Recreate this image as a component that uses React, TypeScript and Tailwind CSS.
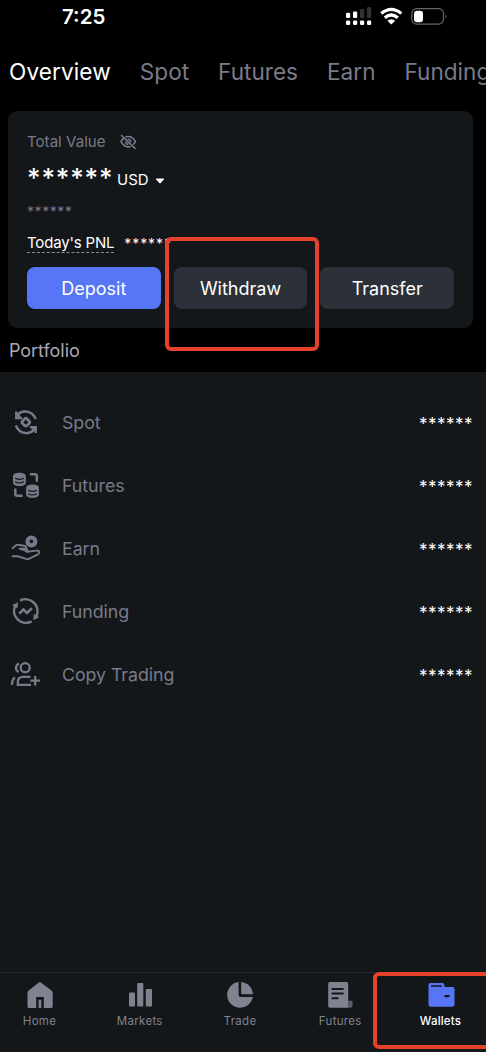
import type { ReactNode } from "react";

const tabs = ["Spot", "Futures", "Earn", "Funding"];

function SpotIcon() {
  return (
    <svg width="32" height="32" viewBox="0 0 32 32" fill="none" stroke="currentColor" strokeWidth="2.5">
      <path d="M6.5 10.5C11 3.8 21 3.3 25.8 13" />
      <path d="M6.3 5.5V12.1H12" />
      <path d="M5.8 19.5C10 29.2 20.5 29.2 25.5 22" />
      <path d="M20 21.2H25.7V27" />
      <path d="M6 12L9 8L11.5 12.6ZM26 21L23 25L20.5 20.6Z" fill="currentColor" stroke="none" />
      <rect x="12.6" y="13" width="6.4" height="6.4" rx="1.8" transform="rotate(45 15.8 16.2)" strokeWidth="2.8" />
    </svg>
  );
}

function CoinsIcon() {
  return (
    <svg width="32" height="32" viewBox="0 0 32 32" fill="none" stroke="currentColor" strokeWidth="2.4">
      <g fill="currentColor" stroke="none">
        <path d="M3 7C3 2.5 15.8 2.5 15.8 7V13.8C15.8 18.3 3 18.3 3 13.8Z" />
        <path d="M16.1 18.8C16.1 14.3 28.9 14.3 28.9 18.8V25.6C28.9 30.1 16.1 30.1 16.1 25.6Z" />
      </g>
      <g stroke="#13171a" strokeWidth="1.1">
        <path d="M5 9.2Q9.4 11.6 13.8 9.2M5 12.8Q9.4 15.2 13.8 12.8" />
        <path d="M18.1 21.2Q22.5 23.6 26.9 21.2M18.1 24.8Q22.5 27.2 26.9 24.8" />
      </g>
      <path d="M20 5.3H25Q26.8 5.3 26.8 7.1V12.8M5.3 19.5V25Q5.3 26.8 7.1 26.8H12.5" />
    </svg>
  );
}

function EarnIcon() {
  return (
    <svg width="32" height="32" viewBox="0 0 32 32" fill="none" stroke="currentColor" strokeWidth="1.9" strokeLinecap="round" strokeLinejoin="round">
      <circle cx="21.4" cy="9.4" r="3.9" strokeWidth="4.2" />
      <path d="M2.6 16.3L6.2 13.2Q7 12.6 8 12.8L14 13.7Q16.6 14.1 16.4 16.6H9.5L14 18.2Q16 19 17.2 19.8" />
      <path d="M16.6 16.6Q17.6 18 17.2 19.8L26.8 18.6Q29.4 18.3 29.2 20.5Q29.1 21.8 27.6 22.7L17.7 27.3L7.5 24.2H2.6" />
    </svg>
  );
}

function FundingIcon() {
  return (
    <svg width="32" height="32" viewBox="0 0 32 32" fill="none" stroke="currentColor" strokeWidth="2.5">
      <path d="M10 5.6A12 12 0 0 1 26.5 21" />
      <path d="M21.6 26.4A12 12 0 0 1 5 11" />
      <path d="M2 10.2L8 7.2L7.6 13.3ZM29.2 22.2L23.4 25.2L23.8 19Z" fill="currentColor" stroke="none" />
      <path d="M9.2 18.7L13.4 14.5L17 18L22 13.2" />
    </svg>
  );
}

function CopyIcon() {
  return (
    <svg width="32" height="32" viewBox="0 0 32 32" fill="none" stroke="currentColor" strokeWidth="2.3">
      <circle cx="15.2" cy="9.7" r="4.5" />
      <path d="M9 5.6Q6 7.2 6 10Q6 12.5 8.6 14" />
      <path d="M20.5 18.9H13Q7.8 18.9 7.8 24V26.9H21" />
      <path d="M5 19.4Q2 21 2 27M25.2 18V27.4M20.4 22.7H30" />
    </svg>
  );
}

const accounts: { name: string; icon: ReactNode }[] = [
  { name: "Spot", icon: <SpotIcon /> },
  { name: "Futures", icon: <CoinsIcon /> },
  { name: "Earn", icon: <EarnIcon /> },
  { name: "Funding", icon: <FundingIcon /> },
  { name: "Copy Trading", icon: <CopyIcon /> },
];

const navItems: { name: string; icon: ReactNode }[] = [
  {
    name: "Home",
    icon: (
      <path d="M13.5 2.8Q14.8 1.8 16.1 2.8L26.5 10.6Q27.7 11.5 27.7 13V26.5Q27.7 28 26.2 28H18.8V17H11.2V28H4Q2.5 28 2.5 26.5V13Q2.5 11.5 3.7 10.6ZM13.6 19.7H16.3V28H13.6Z" />
    ),
  },
  {
    name: "Markets",
    icon: (
      <>
        <rect x="4" y="12.6" width="6" height="13.9" rx="1" />
        <rect x="12.2" y="3" width="6.1" height="23.5" rx="1" />
        <rect x="20.8" y="9" width="6.2" height="17.5" rx="1" />
      </>
    ),
  },
  {
    name: "Trade",
    icon: (
      <>
        <path d="M13.6 2.1A12.9 12.9 0 1 0 27.8 17H15.6Q13.6 17 13.6 15Z" />
        <path d="M16.2 2.1A12.9 12.9 0 0 1 27.9 14.3H17.2Q16.2 14.3 16.2 13.3Z" />
      </>
    ),
  },
  {
    name: "Futures",
    icon: (
      <>
        <path d="M5 2H21.4Q23.2 2 23.2 3.8V27.7H5Q3.2 27.7 3.2 25.9V3.8Q3.2 2 5 2Z" />
        <path d="M23.2 20.7H27.5V25.5Q27.5 27.7 25.3 27.7H23.2Z" opacity=".65" />
        <path d="M6.6 9H18.6M6.6 13.6H18.6M6.6 18.3H13.3" stroke="#13171a" strokeWidth="2" />
      </>
    ),
  },
  {
    name: "Wallets",
    icon: (
      <>
        <path d="M4.5 3H16.3Q18.5 3 18.5 5V7H26.5Q28.5 7 28.5 9V24.7Q28.5 26.7 26.5 26.7H4.5Q2.5 26.7 2.5 24.7V5Q2.5 3 4.5 3Z" />
        <path d="M5 6.8V6.2Q5 5.2 6 5.2H15Q16 5.2 16 6.2V6.8Z" fill="#13171a" />
        <path d="M18.5 15H23.5V17.2H18.5Z" fill="#13171a" />
      </>
    ),
  },
];

function StatusBar() {
  return (
    <header className="flex h-[34px] items-start justify-between pl-[62px] pr-[38px]">
      <span className="pt-[4px] text-[20.5px] font-semibold leading-[26px] text-white">7:25</span>
      <svg width="104" height="20" viewBox="0 0 104 20" className="mt-[6px]" fill="#fff">
        <rect x="2" y="6.7" width="4.2" height="5.2" rx="1.2" />
        <rect x="9" y="5.5" width="4.2" height="6.4" rx="1.2" />
        <rect x="16" y="3" width="4.2" height="9" rx="1.2" fill="#333" />
        <rect x="23" y="1" width="4.2" height="11" rx="1.2" fill="#333" />
        <rect x="2" y="14.6" width="4.2" height="4.4" rx="1.2" />
        <rect x="9" y="14.6" width="4.2" height="4.4" rx="1.2" />
        <rect x="16" y="14.6" width="4.2" height="4.4" rx="1.2" />
        <rect x="23" y="14.6" width="4.2" height="4.4" rx="1.2" />
        <g fill="none" stroke="#fff" strokeWidth="3.2">
          <path d="M37.3 7.6Q47.3 -.8 57.3 7.6" />
          <path d="M40.8 11.8Q47.3 6.2 53.8 11.8" />
        </g>
        <path d="M43.4 14.7Q47.3 11.6 51.2 14.7L47.3 18.5Z" />
        <rect x="67.8" y="2.7" width="31.7" height="15.4" rx="4.8" fill="none" stroke="#666" strokeWidth="1.2" />
        <rect x="70" y="4.8" width="9" height="11.4" rx="3" />
        <path d="M101.5 8.2Q103.5 10.3 101.5 12.4Z" fill="#666" />
      </svg>
    </header>
  );
}

function BalanceCard() {
  return (
    <section className="ml-2 flex h-[217px] w-[465px] flex-col rounded-[9px] bg-[#13171a] px-[19px] pt-5">
      <div className="flex h-[22px] items-center gap-[14px] text-[#797a89]">
        <span className="text-[15px] tracking-[0.05px]">Total Value</span>
        <svg width="17" height="16" viewBox="0 0 17 16" fill="none" stroke="currentColor" strokeWidth="1.6">
          <path d="M5.4 3Q11.5 .8 15.4 7.5Q14.7 9.3 13.2 10.6M10.8 12.4Q4.5 14.3 1 7.7Q2 5.6 3.5 4.3" />
          <path d="M1 1L15.5 14.8M7.6 5.2Q10.8 5.2 10.8 8.3M5.6 7.6Q5.8 10.2 8.4 10.3" />
        </svg>
      </div>
      <div className="flex h-[40px] items-start text-white">
        <span className="w-[90px] pt-[9px] text-[26px] font-medium leading-[32px] tracking-[0.85px]">******</span>
        <span className="pt-[17px] text-[15px] leading-5">USD</span>
        <svg width="10" height="6" viewBox="0 0 10 6" className="ml-[6px] mt-[25px]" fill="#fff">
          <path d="M1.5 .5H8.5Q9.5 .5 8.8 1.4L5.7 5Q5 5.7 4.3 5L1.2 1.4Q.5 .5 1.5 .5Z" />
        </svg>
      </div>
      <div className="flex h-[37px] items-start text-[14px] leading-5 tracking-[0.55px] text-[#797a89]">
        <span className="pt-[9px]">******</span>
      </div>
      <div className="flex h-[25px] items-start text-white">
        <span className="h-[23px] border-b border-dashed border-[#8b8c94] pt-[3px] text-[15px] leading-[20px] tracking-[-0.18px]">Today's PNL</span>
        <span className="ml-[10px] pt-[4px] text-[14px] leading-[20px] tracking-[0.9px]">******</span>
      </div>
      <div className="mt-[12px] flex gap-[13px] text-[18px] text-white">
        <button className="h-[42px] w-[134px] rounded-[8px] bg-[#5676f5] pt-px">Deposit</button>
        <button className="h-[42px] w-[134px] rounded-[8px] bg-[#2c3139] pt-px">Withdraw</button>
        <button className="h-[42px] w-[134px] rounded-[8px] bg-[#2c3139] pt-px">Transfer</button>
      </div>
    </section>
  );
}

export default function App() {
  return (
    <div className="relative flex h-[1052px] w-[486px] flex-col overflow-hidden bg-black font-['Inter',sans-serif]">
      <StatusBar />
      <nav className="flex h-[77px] gap-[29px] overflow-hidden whitespace-nowrap pl-[9px] pt-[23px] text-[22.6px] leading-[30px] text-[#797a89]">
        <span className="tracking-[0.1px] text-white">Overview</span>
        {tabs.map((tab) => (
          <span key={tab}>{tab}</span>
        ))}
      </nav>
      <BalanceCard />
      <h2 className="h-[44px] pl-[9px] pt-[10px] text-[18px] leading-[25px] tracking-[-0.05px] text-[#aaa9b8]">Portfolio</h2>
      <main className="flex flex-1 flex-col bg-[#13171a] pt-[19px]">
        {accounts.map(({ name, icon }) => (
          <div key={name} className="flex h-[63px] items-center pl-[10px] pr-[13px] text-[#797a89]">
            <span className="-mt-px">{icon}</span>
            <span className="ml-[20px] text-[17.8px] leading-[27px] tracking-[-0.05px]">{name}</span>
            <span className="ml-auto pt-[3px] text-[17px] leading-[26px] tracking-[0.5px] text-white">******</span>
          </div>
        ))}
      </main>
      <footer className="flex h-[80px] justify-between border-t border-[#22262a] bg-[#13171a] pl-[9.5px] pr-[15.5px] pt-[7px]">
        {navItems.map(({ name, icon }) => (
          <div key={name} className={name === "Wallets" ? "flex w-[60px] flex-col items-center text-[#5676f5]" : "flex w-[60px] flex-col items-center text-[#81828f]"}>
            <svg width="30" height="30" viewBox="0 0 30 30" fill="currentColor">{icon}</svg>
            <span className={name === "Wallets" ? "mt-[3px] text-[11.5px] font-medium leading-4 tracking-[0.2px] text-white" : "mt-[3px] text-[11.5px] leading-4 tracking-[0.3px]"}>{name}</span>
          </div>
        ))}
      </footer>
      <div className="pointer-events-none absolute left-[165px] top-[237px] h-[114px] w-[154px] rounded-[6px] border-4 border-[#e6412a]" />
      <div className="pointer-events-none absolute left-[373px] top-[972px] h-[77px] w-[130px] rounded-[6px] border-4 border-[#e6412a]" />
    </div>
  );
}
